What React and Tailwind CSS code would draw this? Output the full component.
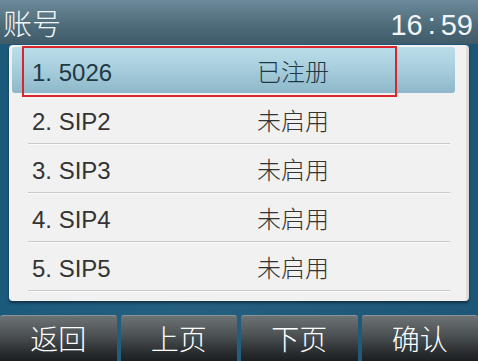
const rows = [
  { name: "1. 5026", status: "已注册" },
  { name: "2. SIP2", status: "未启用" },
  { name: "3. SIP3", status: "未启用" },
  { name: "4. SIP4", status: "未启用" },
  { name: "5. SIP5", status: "未启用" },
];

const softKeys = ["返回", "上页", "下页", "确认"];

const cjk = "font-['Liberation_Sans','Noto_Sans_CJK_SC',sans-serif]";

export default function App() {
  return (
    <div className={`w-[478px] h-[361px] overflow-hidden flex flex-col bg-[linear-gradient(90deg,#1c5a7c,#245f80_40%,#1d5677)] ${cjk}`}>
      {/* 标题栏 */}
      <div className="h-[44px] shrink-0 flex items-center justify-between pl-[3px] pr-[5px] pt-[7px] bg-[linear-gradient(180deg,#6c8a99,#4d6a79_60%,#3f5b69)] text-white">
        <span className="text-[29px] leading-none font-light text-[#f2f6f8]">账号</span>
        <span className="text-[29px] leading-none text-[#f2f6f8] flex items-center">
          <span>16</span>
          <span className="px-[5px] pb-[2px]">:</span>
          <span>59</span>
        </span>
      </div>

      {/* 列表面板 */}
      <div className="relative ml-[9px] mr-[9px] mt-[1px] h-[256px] rounded-[4px] bg-[#f1f1f1] shadow-[0_2px_3px_rgba(0,0,0,0.45)] border-r-[3px] border-[#dcdcdc]">
        <div className="pt-[2px]">
          {rows.map((r, i) => (
            <div key={r.name} className="h-[49px] relative">
              {i === 0 ? (
                <div className="absolute left-[3px] right-[11px] top-0 h-[46px] rounded-[3px] bg-[linear-gradient(180deg,#bcdeeb,#a6cddc_50%,#8db7c8)]" />
              ) : (
                <div className="absolute left-[19px] right-[16px] bottom-0 h-[2px] bg-[#c9c9c9] border-b border-[#fafafa]" />
              )}
              <div className={`relative flex items-center h-[47px] pt-[5px] text-[24px] leading-none ${i === 0 ? "text-[#1f3944]" : "text-[#333333]"}`}>
                <span className="pl-[23px] w-[248px]">{r.name}</span>
                <span className="font-light">{r.status}</span>
              </div>
            </div>
          ))}
        </div>
        {/* 红色标记框 */}
        <div className="absolute left-[13px] top-[1px] w-[375px] h-[51px] border-2 border-[#d8262c]" />
      </div>

      {/* 软键 */}
      <div className="mt-auto grid grid-cols-4 gap-[4px] h-[46px]">
        {softKeys.map((k) => (
          <div
            key={k}
            className="flex items-center justify-center rounded-t-[3px] border-t border-[#8a9399] bg-[linear-gradient(180deg,#6d7275,#4a4f52_45%,#2a2e31_80%,#1c1f21)] text-white text-[28px] font-light leading-none pt-[5px]"
          >
            {k}
          </div>
        ))}
      </div>
    </div>
  );
}
